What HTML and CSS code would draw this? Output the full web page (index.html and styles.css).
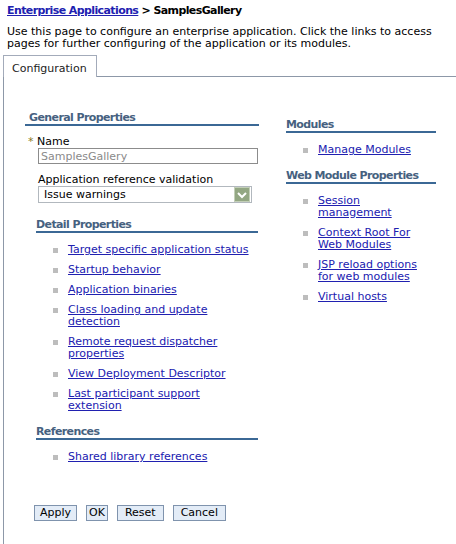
FILE: index.html
```html
<!DOCTYPE html>
<html lang="en">
<head>
    <meta charset="UTF-8">
    <meta name="viewport" content="width=device-width, initial-scale=1.0">
    <title>SamplesGallery</title>
    <link rel="stylesheet" href="styles.css">
</head>
<body>
    <div class="crumb"><a href="#">Enterprise Applications</a> &gt; SamplesGallery</div>
    <p class="intro">Use this page to configure an enterprise application. Click the links to access pages for further configuring of the application or its modules.</p>

    <div class="tabs">
        <span class="tab">Configuration</span>
        <span class="tabFill"></span>
    </div>

    <div class="panel">
        <div class="cols">
            <div class="leftCol">
                <h3 class="heading general">General Properties</h3>
                <div class="field">
                    <label class="req"><span class="star">*</span> Name</label>
                    <input class="textBox" type="text" value="SamplesGallery" readonly>
                </div>
                <div class="field">
                    <label>Application reference validation</label>
                    <div class="select">
                        <span>Issue warnings</span>
                        <span class="arrow">
                            <svg width="10" height="8" viewBox="0 0 10 8"><path d="M1 2 L5 6 L9 2" fill="none" stroke="#fff" stroke-width="2"/></svg>
                        </span>
                    </div>
                </div>

                <h3 class="heading">Detail Properties</h3>
                <ul class="links">
                    <li><a href="#">Target specific application status</a></li>
                    <li><a href="#">Startup behavior</a></li>
                    <li><a href="#">Application binaries</a></li>
                    <li><a href="#">Class loading and update<br>detection</a></li>
                    <li><a href="#">Remote request dispatcher<br>properties</a></li>
                    <li><a href="#">View Deployment Descriptor</a></li>
                    <li><a href="#">Last participant support<br>extension</a></li>
                </ul>

                <h3 class="heading section">References</h3>
                <ul class="links">
                    <li><a href="#">Shared library references</a></li>
                </ul>
            </div>

            <div class="rightCol">
                <h3 class="heading">Modules</h3>
                <ul class="links">
                    <li><a href="#">Manage Modules</a></li>
                </ul>

                <h3 class="heading section">Web Module Properties</h3>
                <ul class="links">
                    <li><a href="#">Session<br>management</a></li>
                    <li><a href="#">Context Root For<br>Web Modules</a></li>
                    <li><a href="#">JSP reload options<br>for web modules</a></li>
                    <li><a href="#">Virtual hosts</a></li>
                </ul>
            </div>
        </div>

        <div class="buttons">
            <button class="btn">Apply</button>
            <button class="btn btnNarrow">OK</button>
            <button class="btn btnWide">Reset</button>
            <button class="btn btnWide">Cancel</button>
        </div>
    </div>
</body>
</html>
```

FILE: styles.css
```css
body {
    margin: 0;
    background-color: white;
    color: black;
    font-family: "DejaVu Sans", Verdana, sans-serif;
    font-size: 11px;
    line-height: 12px;
}
a {
    color: #2020b0;
}
.crumb {
    padding: 5px 7px 0;
    font-weight: bold;
    letter-spacing: -0.6px;
}
.intro {
    margin: 9px 0 0;
    padding: 0 7px;
    max-width: 445px;
}
.tabs {
    display: flex;
    margin: 5px 0 0 3px;
}
.tab {
    border: 1px solid #a3abba;
    border-bottom: none;
    padding: 7px 9px 0 8px;
    height: 14px;
    color: #222;
}
.tabFill {
    flex-grow: 1;
    border-bottom: 1px solid #8d98a8;
}
.panel {
    margin-left: 3px;
    border-left: 1px solid #8d98a8;
    min-height: 467px;
}
.cols {
    display: flex;
    padding-left: 21px;
    gap: 27px;
}
.leftCol {
    width: 234px;
    padding-top: 35px;
}
.rightCol {
    width: 150px;
    padding-top: 42px;
}
.heading {
    margin: 0;
    font-size: 11px;
    line-height: 12px;
    font-weight: bold;
    letter-spacing: -0.6px;
    color: #46617f;
    border-bottom: 2px solid #3b6895;
}
.heading.general {
    padding-left: 4px;
}
.leftCol .heading:not(.general) {
    margin-left: 11px;
    margin-right: 1px;
}
.leftCol .heading:nth-of-type(2) {
    margin-top: 16px;
}
.heading.section {
    margin-top: 14px;
}
.field {
    padding-left: 13px;
    margin-top: 10px;
}
.field label {
    display: block;
}
.req {
    margin-left: -10px;
}
.star {
    color: #8a7a22;
}
.textBox {
    display: block;
    box-sizing: border-box;
    width: 220px;
    height: 16px;
    margin: 0;
    padding: 0 2px;
    border: 1px solid #8c8c8c;
    font-family: inherit;
    font-size: 11px;
    color: #8a8a8a;
}
.select {
    display: flex;
    justify-content: space-between;
    align-items: center;
    box-sizing: border-box;
    width: 214px;
    height: 17px;
    border: 1px solid #b2b8be;
    padding-left: 5px;
}
.arrow {
    display: flex;
    justify-content: center;
    align-items: center;
    width: 14px;
    height: 13px;
    margin-right: 1px;
    background-color: #93a783;
    border: 1px solid #c3cfb8;
}
.links {
    list-style: none;
    margin: 11px 0 0;
    padding-left: 17px;
}
.leftCol .links {
    margin-left: 11px;
}
.links li {
    display: flex;
    margin-bottom: 8px;
}
.links li:last-child {
    margin-bottom: 0;
}
.links li::before {
    content: "";
    flex: none;
    width: 5px;
    height: 5px;
    margin: 4px 10px 0 0;
    background-color: #bdbdbd;
}
.buttons {
    display: flex;
    gap: 9px;
    padding: 42px 0 0 30px;
}
.btn {
    font-family: inherit;
    font-size: 11px;
    line-height: 12px;
    padding: 1px 5px;
    background-color: #e3ecf7;
    border: 1px solid #7f93ad;
    color: black;
    border-radius: 0;
}
.btnNarrow {
    padding: 1px 2px;
}
.btnWide {
    padding: 1px 7px;
}
```
